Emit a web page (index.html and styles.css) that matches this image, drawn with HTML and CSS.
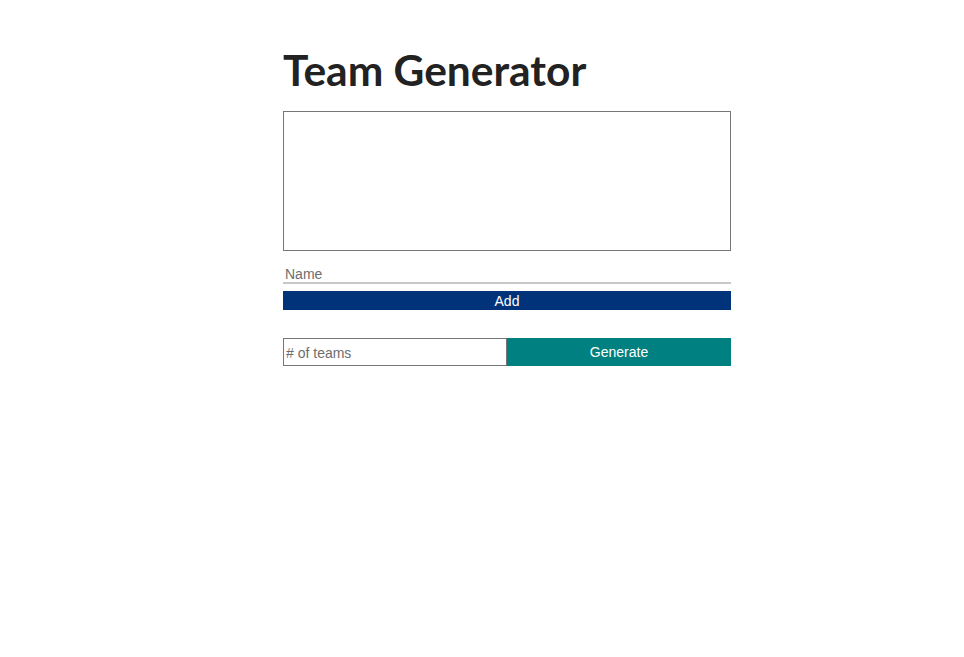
FILE: index.html
```html
<!DOCTYPE html>
<html>
<head>
<meta charset="utf-8">
<link rel="stylesheet" href="styles.css">
</head>
<body>
<main class="app">
  <h1 class="title">Team Generator</h1>
  <textarea class="names"></textarea>
  <input class="name-input" type="text" placeholder="Name">
  <button class="add-btn">Add</button>
  <div class="generate-row">
    <input class="teams-input" type="text" placeholder="# of teams">
    <button class="generate-btn">Generate</button>
  </div>
</main>
</body>
</html>
```
FILE: styles.css
```css
html, body {
  margin: 0;
  padding: 0;
  background: #fff;
}
body {
  font-family: "Liberation Sans", Arial, sans-serif;
  padding-left: 50px;
}
.app {
  width: 448px;
  margin: 0 auto;
  padding-top: 40px;
  display: flex;
  flex-direction: column;
}
.title {
  font-family: Lato, sans-serif;
  font-weight: 700;
  font-size: 42.5px;
  line-height: 60px;
  color: #222;
  margin: 0 0 11px 0;
}
.names {
  box-sizing: border-box;
  width: 448px;
  height: 140px;
  border: 1px solid #767676;
  margin: 0;
  padding: 2px;
  resize: none;
}
.name-input {
  box-sizing: border-box;
  width: 448px;
  height: 22px;
  margin: 11px 0 7px 0;
  padding: 4px 2px 0 2px;
  border: none;
  border-bottom: 2px solid #c8c8c8;
  font-family: "Liberation Sans", Arial, sans-serif;
  font-size: 14px;
  outline: none;
}
.name-input::placeholder, .teams-input::placeholder {
  color: #6d6d6d;
}
.add-btn {
  width: 448px;
  height: 19px;
  margin: 0;
  padding: 0;
  border: none;
  background: #00337a;
  color: #fff;
  font-family: "Liberation Sans", Arial, sans-serif;
  font-size: 14px;
}
.generate-row {
  display: flex;
  margin-top: 28px;
}
.teams-input {
  box-sizing: border-box;
  width: 224px;
  height: 28px;
  margin: 0;
  padding: 1px 2px 0 2px;
  border: 1px solid #767676;
  font-family: "Liberation Sans", Arial, sans-serif;
  font-size: 14px;
  outline: none;
}
.generate-btn {
  width: 224px;
  height: 28px;
  margin: 0;
  padding: 0;
  border: none;
  background: #008080;
  color: #fff;
  font-family: "Liberation Sans", Arial, sans-serif;
  font-size: 14px;
}
```
